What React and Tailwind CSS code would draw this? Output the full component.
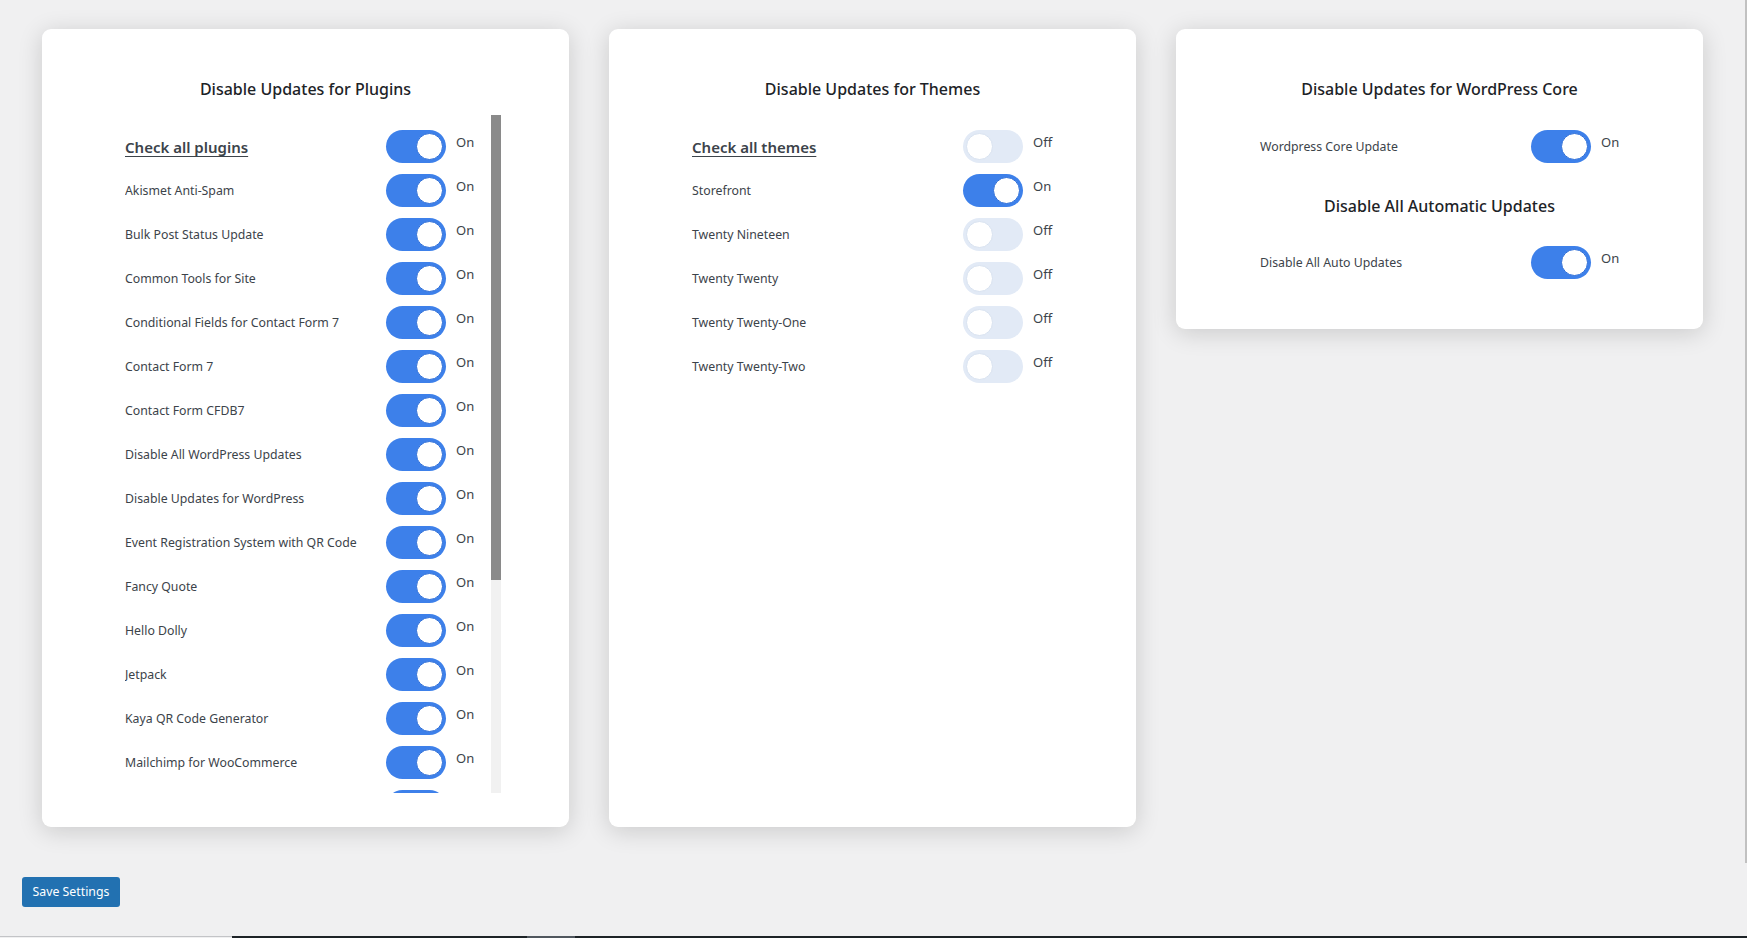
import React from 'react';

const plugins = [
  { name: 'Akismet Anti-Spam', on: true },
  { name: 'Bulk Post Status Update', on: true },
  { name: 'Common Tools for Site', on: true },
  { name: 'Conditional Fields for Contact Form 7', on: true },
  { name: 'Contact Form 7', on: true },
  { name: 'Contact Form CFDB7', on: true },
  { name: 'Disable All WordPress Updates', on: true },
  { name: 'Disable Updates for WordPress', on: true },
  { name: 'Event Registration System with QR Code', on: true },
  { name: 'Fancy Quote', on: true },
  { name: 'Hello Dolly', on: true },
  { name: 'Jetpack', on: true },
  { name: 'Kaya QR Code Generator', on: true },
  { name: 'Mailchimp for WooCommerce', on: true },
  { name: 'Really Simple SSL', on: true },
  { name: 'WooCommerce', on: true },
  { name: 'Yoast SEO', on: true },
];

const themes = [
  { name: 'Storefront', on: true },
  { name: 'Twenty Nineteen', on: false },
  { name: 'Twenty Twenty', on: false },
  { name: 'Twenty Twenty-One', on: false },
  { name: 'Twenty Twenty-Two', on: false },
];

const Toggle = ({ on }) => (
  <div className="flex items-start w-[105px] shrink-0">
    <div
      className={`w-[60px] h-[33px] rounded-full p-[3px] flex items-center ${
        on ? 'bg-[#3d80ea] justify-end' : 'bg-[#e2eaf6] justify-start'
      }`}
    >
      <div
        className={`w-[27px] h-[27px] rounded-full bg-white border ${
          on ? 'border-[#2f6fd8]' : 'border-[#d8e2f0]'
        }`}
      />
    </div>
    <span className="ml-[10px] mt-[2px] text-[13px] leading-[20px] text-[#3c434a]">
      {on ? 'On' : 'Off'}
    </span>
  </div>
);

const Row = ({ label, on, head }) => (
  <div className="flex items-center justify-between h-[33px] mb-[11px]">
    {head ? (
      <span className="mt-[2px] text-[15px] font-semibold text-[#3c434a] underline underline-offset-[3px]">{label}</span>
    ) : (
      <span className="mt-[2px] text-[12.3px] text-[#3c434a]">{label}</span>
    )}
    <Toggle on={on} />
  </div>
);

const Title = ({ children }) => (
  <h2 className="text-center text-[16px] font-medium leading-[26px] text-[#1d2327]">{children}</h2>
);

const App = () => {
  return (
    <div className="w-full h-[938px] bg-[#f0f0f1] flex flex-col overflow-hidden font-['Noto_Sans',sans-serif]">
      <div className="flex flex-1">
        <div className="flex-1 pl-[22px] pt-[29px]">
          <div className="flex items-start gap-[40px] ml-[20px]">
            {/* Plugins */}
            <div className="w-[527px] h-[798px] bg-white rounded-[9px] shadow-[0_4px_24px_rgba(0,0,0,0.16)] pt-[47px]">
              <Title>Disable Updates for Plugins</Title>
              <div className="mt-[13px] ml-[83px] w-[376px] h-[678px] flex">
                <div className="flex-1 overflow-hidden pt-[15px]">
                  <Row label="Check all plugins" on head />
                  {plugins.map((p) => (
                    <Row key={p.name} label={p.name} on={p.on} />
                  ))}
                </div>
                <div className="w-[10px] flex flex-col bg-[#f1f1f1]">
                  <div className="h-[465px] bg-[#8a8a8a]" />
                </div>
              </div>
            </div>

            {/* Themes */}
            <div className="w-[527px] h-[798px] bg-white rounded-[9px] shadow-[0_4px_24px_rgba(0,0,0,0.16)] pt-[47px]">
              <Title>Disable Updates for Themes</Title>
              <div className="mt-[13px] ml-[83px] w-[376px] pt-[15px]">
                <Row label="Check all themes" on={false} head />
                {themes.map((t) => (
                  <Row key={t.name} label={t.name} on={t.on} />
                ))}
              </div>
            </div>

            {/* Core */}
            <div className="w-[527px] bg-white rounded-[9px] shadow-[0_4px_24px_rgba(0,0,0,0.16)] pt-[47px] pb-[39px]">
              <Title>Disable Updates for WordPress Core</Title>
              <div className="mt-[28px] ml-[84px] w-[376px]">
                <Row label="Wordpress Core Update" on />
              </div>
              <div className="mt-[30px]">
                <Title>Disable All Automatic Updates</Title>
              </div>
              <div className="mt-[27px] ml-[84px] w-[376px]">
                <Row label="Disable All Auto Updates" on />
              </div>
            </div>
          </div>

          <button className="mt-[50px] h-[30px] w-[98px] rounded-[3px] bg-[#2271b1] text-white text-[12.3px] leading-[30px]">
            Save Settings
          </button>
        </div>
        <div className="w-[2px] shrink-0">
          <div className="h-[863px] bg-[#c1c1c1]" />
        </div>
      </div>
      <div className="flex h-[2px] shrink-0">
        <div className="w-[232px] border-t border-[#c3c4c7]" />
        <div className="w-[295px] bg-[#1d2327]" />
        <div className="w-[48px] bg-[#50575e]" />
        <div className="flex-1 bg-[#1d2327]" />
      </div>
    </div>
  );
};

export default App;
